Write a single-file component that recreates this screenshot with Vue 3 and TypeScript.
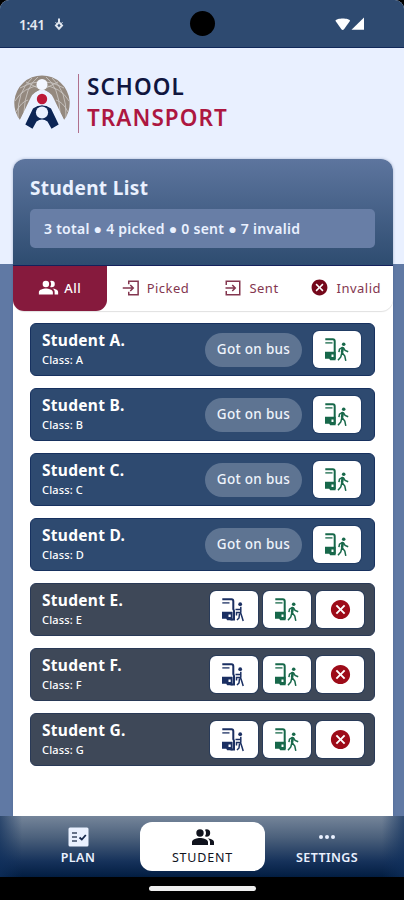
<script setup lang="ts">
type Tab = { label: string; icon: 'people' | 'picked' | 'sent' | 'invalid' }
type Student = { letter: string; picked: boolean }

const tabs: Tab[] = [
  { label: 'All', icon: 'people' },
  { label: 'Picked', icon: 'picked' },
  { label: 'Sent', icon: 'sent' },
  { label: 'Invalid', icon: 'invalid' },
]

const students: Student[] = ['A', 'B', 'C', 'D', 'E', 'F', 'G'].map((letter, i) => ({
  letter,
  picked: i < 4,
}))

const PEOPLE =
  'M16.5 13.2C18.3 14.100 19 15.400 19 17v3h4v-3c0-2.180-3.570-3.470-6.500-3.800zM15.500 11.700a3.700 3.700 0 1 0 0-7.400 3.700 3.700 0 0 0-1.600.4Q15 6.200 15 8t-1.100 3.300a3.700 3.700 0 0 0 1.600.4zM9 11.700a3.700 3.700 0 1 0 0-7.400 3.700 3.700 0 0 0 0 7.400zm0 1.300c-2.670 0-8 1.340-8 4v3h16v-3c0-2.660-5.330-4-8-4z'
const CANCEL =
  'M12 2C6.47 2 2 6.47 2 12s4.47 10 10 10 10-4.47 10-10S17.53 2 12 2zm5 13.59L15.59 17 12 13.41 8.41 17 7 15.59 10.59 12 7 8.41 8.41 7 12 10.59 15.59 7 17 8.41 13.41 12 17 15.59z'
const BUS_FRAME = 'M.3 1.3H7.8Q9.700 1.300 9.700 3.300V21'
const BUS_BASE = 'M0 13.800H10.600V22.300H5.200L4.200 20.800H0zM6.500 16.500v2.600h2.200v-2.600z'
</script>

<template>
  <div class="screen">
    <div class="status">
      <span class="time">1:41</span>
      <svg class="debug" viewBox="0 0 10 14">
        <path d="M5 1.500v4M5 5.200l3 3.300L5 11.800 2 8.500z" fill="none" stroke="#dfe5ee" stroke-width="2" />
        <path d="M1.500 5.200l2 2M8.500 5.200l-2 2" stroke="#dfe5ee" stroke-width="1" />
      </svg>
      <span class="camera"></span>
      <svg class="signal" viewBox="0 0 30 14">
        <path d="M.4 3.700C1.500.6 14 .6 15.100 3.700L9.200 12q-1.500 1.800-3 0z" fill="#fff" />
        <path d="M29 .4V12.800H16.500z" fill="#fff" />
      </svg>
    </div>

    <header class="brand">
      <svg class="logo" viewBox="0 0 58 56">
        <path d="M7 45A27.700 27.700 0 1 1 51 45L38.500 21Q29 8 19.500 21z" fill="#94897f" />
        <g fill="none" stroke="#cfccc9" stroke-width=".8">
          <path d="M7 13Q29 0 51 13M2 26Q10 12 29 10 48 12 56 26M3 37Q8 27 15 25M55 37Q50 27 43 25" />
          <path d="M19 3Q4 16 5 42M39 3Q54 16 53 42M25 2Q12 12 11 37M33 2Q46 12 47 37M13 7L29 15 45 7" />
        </g>
        <circle cx="29" cy="9.500" r="5.500" fill="#f3f6ff" />
        <path d="M29 15.500Q21 15.500 17.500 23L6.500 46 13 51 22 37H36L45 51 51.500 46 40.500 23Q37 15.500 29 15.500z" fill="#eaf1ff" />
        <path d="M20 33.500L12.300 49.500 19.500 53.800 23.500 46.500Q29 42.500 34.500 46.500L38.500 53.800 45.700 49.500 38 33.500Q29 27 20 33.500z" fill="#0c2555" />
        <circle cx="29" cy="37.500" r="6.100" fill="#eaf1ff" />
        <path d="M22 28H36V31.500Q29 28.500 22 31.500z" fill="#eaf1ff" />
        <circle cx="29" cy="24" r="5.200" fill="#bd1838" />
      </svg>
      <div class="wordmark">
        <div class="school">SCHOOL</div>
        <div class="transport">TRANSPORT</div>
      </div>
    </header>

    <main class="card">
      <section class="summary">
        <h1>Student List</h1>
        <p>3 total ● 4 picked ● 0 sent ● 7 invalid</p>
      </section>

      <nav class="tabs">
        <div v-for="tab in tabs" :key="tab.icon" class="tab" :class="tab.icon">
          <svg v-if="tab.icon === 'people'" viewBox="0 0 24 24"><path :d="PEOPLE" /></svg>
          <svg v-else-if="tab.icon === 'invalid'" viewBox="0 0 24 24"><path :d="CANCEL" /></svg>
          <svg v-else-if="tab.icon === 'picked'" viewBox="0 0 24 24">
            <path class="line" d="M9 7V3H21.500V21H9V17M1 12H15M11 8l4 4-4 4" />
          </svg>
          <svg v-else viewBox="0 0 24 24">
            <path class="line" d="M3 8V3H21V21H3V16M2 12H15M11 8l4 4-4 4" />
          </svg>
          <span>{{ tab.label }}</span>
        </div>
      </nav>

      <ul class="list">
        <li v-for="s in students" :key="s.letter" class="row" :class="{ pending: !s.picked }">
          <div class="who">
            <div class="name">Student {{ s.letter }}.</div>
            <div class="grade">Class: {{ s.letter }}</div>
          </div>
          <span v-if="s.picked" class="pill">Got on bus</span>
          <button v-else class="action board">
            <svg viewBox="0 0 24 24">
              <path class="frame" d="M.3 1.300H9.500Q11.300 1.300 11.300 3.300V11L12 13V21.500H8.500" />
              <path class="frame thin" d="M.3 4.900H7.500" />
              <path fill-rule="evenodd" :d="BUS_BASE" />
              <circle cx="18.200" cy="6.200" r="1.900" />
              <path class="limb" d="M18.800 8.800V14.500M18.500 11.500H13.500M19 14.500H14.500V17.500M18.500 14.500l1.500 4.500 1.200 4M17.500 15.500l-.5 4.500-2 2" />
            </svg>
          </button>
          <button class="action leave">
            <svg viewBox="0 0 24 24">
              <path class="frame" :d="BUS_FRAME" />
              <path class="frame thin" d="M.3 4.900H7.500" />
              <path fill-rule="evenodd" :d="BUS_BASE" />
              <circle cx="18.700" cy="6.300" r="1.800" />
              <path class="limb" d="M17.800 9l-1 6M17.800 9.200l-3.300 2-.6 3M18.300 9.700l1.800 2.800 3.100 1.200M17 14.500l2.800 3.500 1 4.800M16.800 15l-1 4-2.800 3.300" />
              <path class="torso" d="M17.900 9.500L17 14.500" />
            </svg>
          </button>
          <button v-if="!s.picked" class="action reject">
            <svg viewBox="0 0 24 24"><path :d="CANCEL" /></svg>
          </button>
        </li>
      </ul>
    </main>

    <footer class="bottom">
      <div class="item plan">
        <svg viewBox="0 0 21 20">
          <rect x=".5" y=".5" width="20" height="19" rx="1.500" fill="#eaf1ff" />
          <path d="M4 6H9M4 10H9M4 14H9" stroke="#3b4964" stroke-width="1.500" />
          <path d="M11.500 10.500l2.300 2 4-4.500" fill="none" stroke="#14264a" stroke-width="1.800" />
        </svg>
        <span>PLAN</span>
      </div>
      <div class="item active">
        <svg viewBox="0 0 24 24"><path :d="PEOPLE" /></svg>
        <span>STUDENT</span>
      </div>
      <div class="item settings">
        <svg viewBox="0 0 18 20">
          <circle cx="3" cy="10" r="2" /><circle cx="9" cy="10" r="2" /><circle cx="15" cy="10" r="2" />
        </svg>
        <span>SETTINGS</span>
      </div>
    </footer>
    <div class="gesture"><span></span></div>
  </div>
</template>

<style>
body {
  background: #000;
}
</style>

<style scoped>
.screen {
  width: 404px;
  height: 900px;
  display: flex;
  flex-direction: column;
  overflow: hidden;
  box-sizing: border-box;
  border-radius: 9px 9px 0 0;
  background: linear-gradient(#e9f0ff 264px, #6079a4 264px);
  font-family: "Noto Sans", sans-serif;
}
.status {
  flex: none;
  height: 48px;
  box-sizing: border-box;
  padding: 0 39px 0 19px;
  display: flex;
  align-items: center;
  background: #2e4a70;
  border-bottom: 1px solid #11295a;
  color: #e5eaf2;
}
.time {
  width: 35px;
  font-size: 13.500px;
  font-weight: 600;
  letter-spacing: -0.3px;
  padding-top: 2px;
}
.debug {
  width: 10px;
  height: 14px;
}
.camera {
  width: 25px;
  height: 25px;
  margin-left: 126px;
  border-radius: 50%;
  background: #000;
}
.signal {
  width: 30px;
  height: 14px;
  margin-left: auto;
}
.brand {
  flex: none;
  height: 111px;
  box-sizing: border-box;
  padding: 26px 0 0 13px;
  display: flex;
  align-items: flex-start;
}
.logo {
  width: 58px;
  height: 56px;
  margin-top: 1px;
}
.wordmark {
  margin-left: 7px;
  height: 59px;
  padding-left: 8px;
  border-left: 1px solid #b0708d;
  font-size: 22.500px;
  line-height: 31px;
  font-weight: 600;
  letter-spacing: 1.050px;
}
.wordmark div {
  margin-top: -3px;
  margin-bottom: 3px;
}
.school {
  color: #10163f;
}
.transport {
  color: #ad1741;
}
.card {
  flex: none;
  width: 380px;
  height: 657px;
  margin-left: 12.500px;
  border-radius: 12px 12px 0 0;
  background: #fff;
  overflow: hidden;
  box-shadow: 0 0 3px #3c558566;
}
.summary {
  height: 107px;
  box-sizing: border-box;
  padding: 16px 17.500px 0;
  border-bottom: 1px solid #14215c;
  background: linear-gradient(#5d759e, #2e4c70);
}
h1 {
  margin: 0;
  height: 34px;
  font-size: 19px;
  line-height: 27px;
  font-weight: 700;
  letter-spacing: 0.350px;
  color: #eaf1ff;
}
p {
  margin: 0;
  height: 39px;
  padding-left: 14px;
  border-radius: 5px;
  background: #687ea6;
  color: #eaf1ff;
  font-size: 14px;
  line-height: 39px;
  font-weight: 600;
  letter-spacing: 0.260px;
}
.tabs {
  height: 45px;
  display: grid;
  grid-template-columns: 94.500px 97px 95px 93.500px;
  border-radius: 0 0 12px 12px;
  box-shadow: 0 1px 1px #00000020;
}
.tab {
  display: flex;
  align-items: center;
  justify-content: center;
  gap: 7px;
  padding-bottom: 2px;
  font-size: 13px;
  letter-spacing: 0.5px;
  color: #83364f;
}
.tab svg {
  width: 18px;
  height: 18px;
  fill: currentColor;
}
.tab .line {
  fill: none;
  stroke: currentColor;
  stroke-width: 2;
}
.tab.people {
  gap: 5px;
  border-radius: 0 0 11px 11px;
  background: #861a3d;
  color: #fff;
  font-weight: 500;
}
.tab.people svg {
  width: 21px;
  height: 21px;
}
.tab.invalid svg {
  width: 19px;
  height: 19px;
  color: #75081b;
}
.list {
  margin: 0;
  padding: 12px 17.500px 0;
  list-style: none;
  display: flex;
  flex-direction: column;
  gap: 12px;
}
.row {
  height: 53px;
  box-sizing: border-box;
  padding: 0 13px 0 11px;
  display: flex;
  align-items: center;
  gap: 11px;
  border: 1px solid #17315f;
  border-radius: 6px;
  background: #2e4a70;
  color: #fff;
}
.row.pending {
  gap: 5px;
  padding-right: 10px;
  background: #3e4858;
  border-color: #293956;
}
.who {
  flex: 1;
  padding-bottom: 1px;
}
.name {
  font-size: 15.500px;
  line-height: 21px;
  font-weight: 700;
  letter-spacing: 0.280px;
}
.grade {
  font-size: 11px;
  line-height: 18px;
  font-weight: 500;
  letter-spacing: 0.150px;
}
.pill {
  width: 97px;
  height: 34px;
  border-radius: 17px;
  background: #5e7492;
  color: #eef3fb;
  font-size: 13.500px;
  line-height: 32px;
  font-weight: 500;
  letter-spacing: 0.300px;
  text-align: center;
}
.action {
  width: 48px;
  height: 37px;
  padding: 0;
  display: flex;
  align-items: center;
  justify-content: center;
  border: 0;
  border-radius: 6px;
  background: #fff;
  box-shadow: 0 0 0 1px #17305a88;
}
.action svg {
  width: 24px;
  height: 24px;
  fill: currentColor;
}
.board {
  color: #1a2f62;
}
.leave {
  color: #17684a;
}
.reject {
  color: #9d0b18;
}
.action.reject svg {
  width: 23px;
  height: 23px;
}
.frame,
.limb,
.torso {
  fill: none;
  stroke: currentColor;
  stroke-width: 2;
}
.thin {
  stroke-width: 1.300;
}
.limb {
  stroke-width: 1.500;
}
.torso {
  stroke-width: 2.600;
}
.bottom {
  flex: none;
  height: 61px;
  display: grid;
  grid-template-columns: 124px 125px 124px;
  justify-content: center;
  padding-left: 1px;
  align-items: center;
  background:
    linear-gradient(90deg, #0f2f5cb0 0, #0f2f5c00 22px, #0f2f5c00 382px, #0f2f5cb0 404px),
    linear-gradient(#75859a, #4c617c 35%, #15315a 75%, #021d41);
}
.item {
  height: 49px;
  display: flex;
  flex-direction: column;
  align-items: center;
  color: #eaf1ff;
  font-size: 12.500px;
  line-height: 19px;
  font-weight: 600;
  letter-spacing: 0.400px;
}
.item svg {
  width: 21px;
  height: 20px;
  margin: 5px 0 1px;
  fill: currentColor;
}
.item.settings svg {
  width: 18px;
}
.item.active {
  border-radius: 12px;
  background: #fff;
  color: #10131d;
  font-weight: 400;
  letter-spacing: 0.8px;
}
.item.active svg {
  width: 24px;
  height: 24px;
  margin: 3px 0 -1px;
}
.gesture {
  flex: none;
  height: 23px;
  display: flex;
  align-items: center;
  justify-content: center;
  background: #000;
}
.gesture span {
  width: 107px;
  height: 5px;
  border-radius: 3px;
  background: #eee;
}
</style>
